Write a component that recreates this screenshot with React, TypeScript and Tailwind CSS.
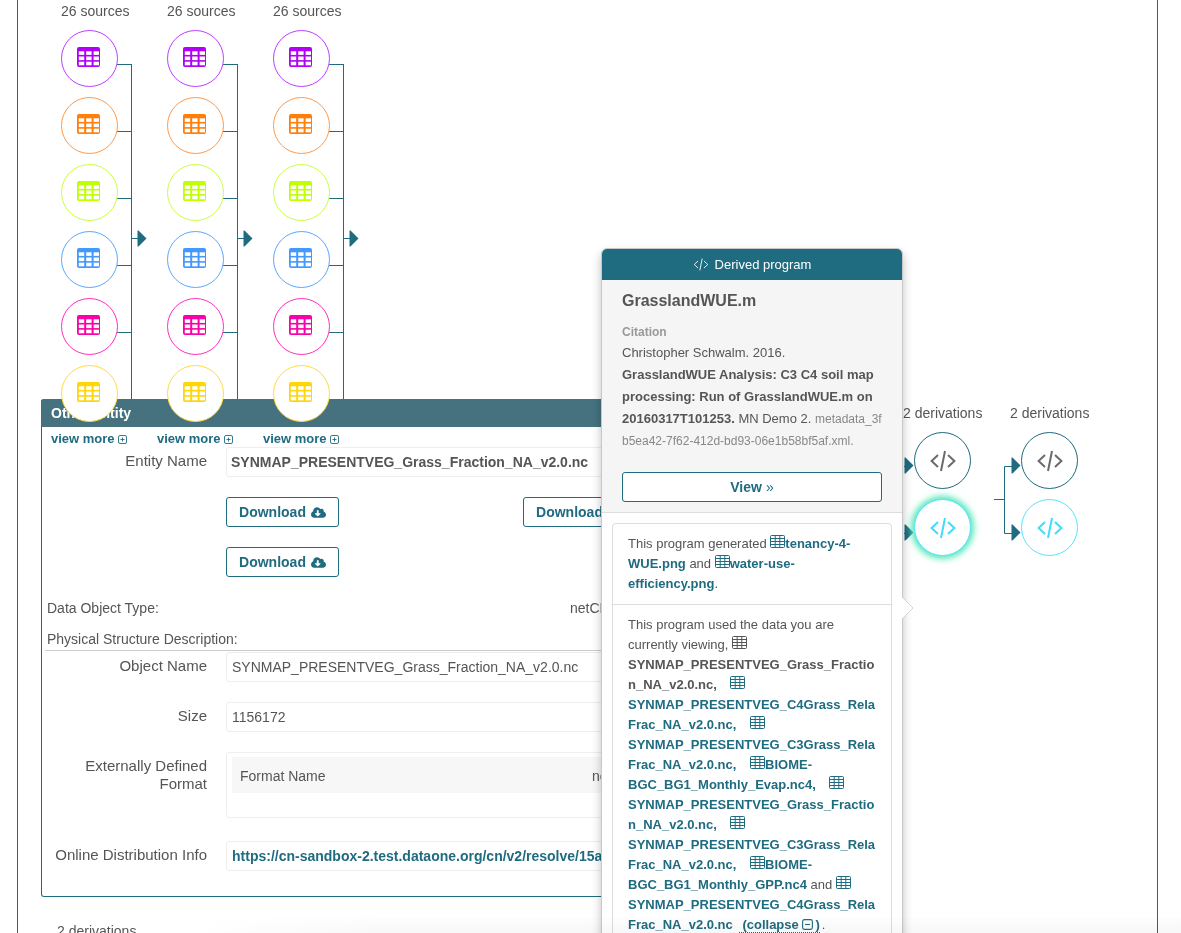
import React from "react";
import { FaCloudDownloadAlt } from "react-icons/fa";

const TEAL = "#1f6b80";

function SolidTable({ color }: { color: string }) {
  const xs = [1.8, 9.2, 16.6];
  const ys = [4.3, 9.5, 14.7];
  return (
    <svg width="23" height="20" viewBox="0 0 23 20" className="block">
      <rect x="0" y="0" width="23" height="20" rx="2" fill={color} />
      {ys.map((y) => xs.map((x) => <rect key={`${x}-${y}`} x={x} y={y} width="5.4" height="3.6" fill="#fff" />))}
    </svg>
  );
}

function OutlineTable({ color = TEAL }: { color?: string }) {
  return (
    <svg width="15" height="13" viewBox="0 0 15 13" className="inline-block align-[0px]">
      <rect x="0.5" y="0.5" width="14" height="12" rx="1" fill="none" stroke={color} />
      <path d="M0.5 3.5H14.5M0.5 6.5H14.5M0.5 9.5H14.5M5.2 0.5V12.5M9.8 0.5V12.5" stroke={color} fill="none" strokeWidth="1" />
    </svg>
  );
}

function CodeIcon({ color, w = 26, h = 22, sw = 2 }: { color: string; w?: number; h?: number; sw?: number }) {
  return (
    <svg width={w} height={h} viewBox="0 0 26 22" className="block" fill="none" stroke={color} strokeWidth={sw}>
      <path d="M8 5L1.6 11L8 17M18 5L24.4 11L18 17M15 1L11 21" />
    </svg>
  );
}

function BoxSign({ plus, size = 9 }: { plus: boolean; size?: number }) {
  return (
    <svg width={size} height={size} viewBox="0 0 9 9" className="inline-block align-[-0.5px]" fill="none" stroke={TEAL} strokeWidth={0.9}>
      <rect x="0.5" y="0.5" width="8" height="8" rx="1.5" />
      <path d={plus ? "M2.5 4.5H6.5M4.5 2.5V6.5" : "M2.5 4.5H6.5"} />
    </svg>
  );
}

const sources = [
  { c: "#b000f5", b: "#bb40ff" },
  { c: "#ff7f0a", b: "#ff9a4a" },
  { c: "#bfff00", b: "#c8ff40" },
  { c: "#4499ff", b: "#5aa8ff" },
  { c: "#fa00a8", b: "#ff30bc" },
  { c: "#ffd60a", b: "#ffdc40" },
];

function SourceColumn() {
  return (
    <div className="relative w-[106px] pt-[1px]">
      <svg width="106" height="422" className="absolute left-0 top-0" fill="none" stroke={TEAL}>
        {[64.5, 131.5, 198.5, 265.5, 332.5].map((y) => (
          <path key={y} d={`M56 ${y}H70.5`} />
        ))}
        <path d="M70.5 64V399M70.5 238.5H78" />
        <path d="M76.5 230.5H77.5L85.5 238.5L77.5 246.5H76.5Z" fill={TEAL} stroke="none" />
      </svg>
      <div className="mb-[9px] h-[20px] text-[14px] leading-[20px] text-[#555]">26 sources</div>
      <div className="flex flex-col gap-[10px]">
        {sources.map((s) => (
          <div
            key={s.c}
            className="relative z-10 flex h-[57px] w-[57px] items-center justify-center rounded-full border bg-white pb-[3px] pr-[2px]"
            style={{ borderColor: s.b }}
          >
            <SolidTable color={s.c} />
          </div>
        ))}
      </div>
    </div>
  );
}

function ViewMore() {
  return (
    <div className="w-[106px] text-[13px] font-bold leading-[16px] text-[#1f6b80]">
      view more <BoxSign plus />
    </div>
  );
}

function DownloadBtn() {
  return (
    <div className="mb-[20px] w-[297px]">
      <div className="flex h-[30px] w-[113px] items-center justify-center gap-[5px] rounded-[3px] border border-[#1f6b80] text-[14px] font-bold text-[#1f6b80]">
        Download <FaCloudDownloadAlt size={15} />
      </div>
    </div>
  );
}

function Row({ label, className, children }: { label: React.ReactNode; className?: string; children: React.ReactNode }) {
  return (
    <div className={`flex gap-[19px] ${className ?? ""}`}>
      <div className="w-[165px] shrink-0 pt-[5px] text-right text-[15px] leading-[18px] text-[#555]">{label}</div>
      <div className="flex-1 rounded-[3px] border border-[#eeeeee] text-[14px] leading-[20px] text-[#555]">{children}</div>
    </div>
  );
}

function Bold({ children }: { children: React.ReactNode }) {
  return <b className="font-bold text-[#1f6b80]">{children}</b>;
}

function GapA() {
  return <span className="inline-block w-[10px]" />;
}

function GapB() {
  return <span className="inline-block w-[9px]" />;
}

function Popover() {
  return (
    <div className="absolute left-[601px] top-[248px] z-20 w-[302px] rounded-[6px] border border-[#c8c8c8] bg-white pb-[40px] shadow-[0_5px_10px_rgba(0,0,0,0.25)]">
      <svg width="12" height="22" className="absolute left-[300px] top-[348px]">
        <path d="M0 0L11 11L0 22Z" fill="#fff" />
        <path d="M0 0L11 11L0 22" fill="none" stroke="#d4d4d4" />
      </svg>
      <div className="flex h-[31px] items-center justify-center gap-[6px] rounded-t-[5px] bg-[#1f6b80] text-[13px] text-white">
        <CodeIcon color="#fff" w={16} h={13} sw={1.5} />
        Derived program
      </div>
      <div className="h-[233px] border-b border-[#dddddd] bg-[#f5f5f5] px-[20px] text-[#555]">
        <div className="pt-[11px] text-[16px] font-bold leading-[20px]">GrasslandWUE.m</div>
        <div className="mt-[13px] text-[12px] font-bold leading-[16px] text-[#999]">Citation</div>
        <div className="mt-[2px] whitespace-nowrap text-[13px] leading-[22px]">
          Christopher Schwalm. 2016.
          <br />
          <b>GrasslandWUE Analysis: C3 C4 soil map</b>
          <br />
          <b>processing: Run of GrasslandWUE.m on</b>
          <br />
          <b>20160317T101253.</b> MN Demo 2. <span className="text-[12px] text-[#888]">metadata_3f</span>
          <br />
          <span className="text-[12px] text-[#888]">b5ea42-7f62-412d-bd93-06e1b58bf5af.xml.</span>
        </div>
        <div className="mt-[20px] flex h-[30px] items-center justify-center gap-[4px] rounded-[3px] border border-[#1f6b80] bg-white text-[14px] font-bold text-[#1f6b80]">
          View <span className="font-normal">»</span>
        </div>
      </div>
      <div className="px-[10px] pt-[10px]">
        <div className="w-[280px] rounded-t-[4px] border border-[#dddddd] text-[13px] leading-[20px] text-[#555]">
          <div className="border-b border-[#dddddd] px-[15px] pb-[10px] pt-[10px]">
            This program generated <OutlineTable />
            <Bold>tenancy-4-</Bold>
            <br />
            <Bold>WUE.png</Bold> and <OutlineTable />
            <Bold>water-use-</Bold>
            <br />
            <Bold>efficiency.png</Bold>.
          </div>
          <div className="whitespace-nowrap px-[15px] pb-[10px] pt-[10px]">
            This program used the data you are
            <br />
            currently viewing, <OutlineTable color="#555" />
            <br />
            <b>SYNMAP_PRESENTVEG_Grass_Fractio</b>
            <br />
            <b>n_NA_v2.0.nc,</b>
            <GapB /> <OutlineTable />
            <br />
            <Bold>SYNMAP_PRESENTVEG_C4Grass_Rela</Bold>
            <br />
            <Bold>Frac_NA_v2.0.nc,</Bold>
            <GapA /> <OutlineTable />
            <br />
            <Bold>SYNMAP_PRESENTVEG_C3Grass_Rela</Bold>
            <br />
            <Bold>Frac_NA_v2.0.nc,</Bold>
            <GapA /> <OutlineTable />
            <Bold>BIOME-</Bold>
            <br />
            <Bold>BGC_BG1_Monthly_Evap.nc4,</Bold>
            <GapA /> <OutlineTable />
            <br />
            <Bold>SYNMAP_PRESENTVEG_Grass_Fractio</Bold>
            <br />
            <Bold>n_NA_v2.0.nc,</Bold>
            <GapB /> <OutlineTable />
            <br />
            <Bold>SYNMAP_PRESENTVEG_C3Grass_Rela</Bold>
            <br />
            <Bold>Frac_NA_v2.0.nc,</Bold>
            <GapA /> <OutlineTable />
            <Bold>BIOME-</Bold>
            <br />
            <Bold>BGC_BG1_Monthly_GPP.nc4</Bold> and <OutlineTable />
            <br />
            <Bold>SYNMAP_PRESENTVEG_C4Grass_Rela</Bold>
            <br />
            <Bold>Frac_NA_v2.0.nc</Bold>
            <span className="inline-block w-[6px]" />
            <span className="border-b border-dotted border-[#555] font-bold text-[#1f6b80]">
              {" "}
              (collapse <BoxSign plus={false} size={11} />
              <span className="ml-[2px]">)</span>
            </span>
            <span className="ml-[2px]">.</span>
          </div>
        </div>
      </div>
    </div>
  );
}

function DerivNode({ cls, color, border, extra }: { cls: string; color: string; border: string; extra?: string }) {
  return (
    <div
      className={`absolute flex h-[57px] w-[57px] items-center justify-center rounded-full border bg-white ${cls} ${extra ?? ""}`}
      style={{ borderColor: border }}
    >
      <CodeIcon color={color} />
    </div>
  );
}

export default function App() {
  return (
    <div className="relative h-[933px] w-[1181px] overflow-hidden bg-white font-['Liberation_Sans',Arial,sans-serif]">
      <div className="relative ml-[17px] h-[933px] w-[1141px] border-x border-[#1f6b80]">
        <div className="flex pl-[43px]">
          <SourceColumn />
          <SourceColumn />
          <SourceColumn />
        </div>

        <div className="relative ml-[23px] mt-[-23px] w-[700px] rounded-[3px] border border-t-0 border-[#1f6b80] pb-[25px]">
          <div className="-mx-px flex h-[28px] items-center rounded-t-[3px] bg-[#46727f] pl-[10px] text-[14px] font-bold text-white">
            Other Entity
          </div>
          <div className="flex h-[20px] items-start pl-[9px] pt-[4px]">
            <ViewMore />
            <ViewMore />
            <ViewMore />
          </div>
          <Row label="Entity Name">
            <div className="h-[28px] pl-[4px] pt-[4px] font-bold">SYNMAP_PRESENTVEG_Grass_Fraction_NA_v2.0.nc</div>
          </Row>
          <div className="ml-[184px] mt-[20px] flex w-[594px] flex-wrap">
            <DownloadBtn />
            <DownloadBtn />
            <DownloadBtn />
          </div>
          <div className="ml-[5px] mt-[1px] flex h-[20px] text-[14px] leading-[20px] text-[#555]">
            <div className="w-[523px]">Data Object Type:</div>
            <div>netCDF-3</div>
          </div>
          <div className="ml-[3px] mt-[11px] h-[22px] border-b border-[#cccccc] pl-[2px] text-[14px] leading-[20px] text-[#555]">
            Physical Structure Description:
          </div>
          <Row label="Object Name" className="mt-[1px]">
            <div className="h-[28px] pl-[5px] pt-[4px]">SYNMAP_PRESENTVEG_Grass_Fraction_NA_v2.0.nc</div>
          </Row>
          <Row label="Size" className="mt-[20px]">
            <div className="h-[28px] pl-[5px] pt-[4px]">1156172</div>
          </Row>
          <Row
            label={
              <>
                Externally Defined
                <br />
                Format
              </>
            }
            className="mt-[20px]"
          >
            <div className="h-[64px] px-[5px] pt-[4px]">
              <div className="flex h-[36px] items-center bg-[#f7f7f7] pl-[8px] pt-[1px]">
                <div className="w-[352px]">Format Name</div>
                <div>netCDF-3</div>
              </div>
            </div>
          </Row>
          <Row label="Online Distribution Info" className="mt-[23px]">
            <div className="h-[28px] overflow-hidden whitespace-nowrap pl-[5px] pt-[4px] font-bold text-[#1f6b80]">
              https://cn-sandbox-2.test.dataone.org/cn/v2/resolve/15a0c1b8-53d2-4c3e-9f2e-7d1e6a2b0c44
            </div>
          </Row>
        </div>

        <div className="ml-[39px] mt-[24px] text-[14px] leading-[20px] text-[#555]">2 derivations</div>

        <div className="absolute left-[885px] top-[403px] text-[14px] leading-[20px] text-[#555]">2 derivations</div>
        <div className="absolute left-[992px] top-[403px] text-[14px] leading-[20px] text-[#555]">2 derivations</div>

        <svg width="130" height="90" className="absolute left-[886px] top-[455px]" fill="none" stroke={TEAL}>
          <path d="M0 11.5H2M0 78.5H2" />
          <path d="M0.5 2.5H1.5L9.5 10.5L1.5 18.5H0.5Z" fill={TEAL} stroke="none" />
          <path d="M0.5 69.5H1.5L9.5 77.5L1.5 85.5H0.5Z" fill={TEAL} stroke="none" />
          <path d="M90 44.5H100.5M100.5 11.5V78.5M100.5 11.5H109M100.5 78.5H109" />
          <path d="M107.5 2.5H108.5L116.5 10.5L108.5 18.5H107.5Z" fill={TEAL} stroke="none" />
          <path d="M107.5 69.5H108.5L116.5 77.5L108.5 85.5H107.5Z" fill={TEAL} stroke="none" />
        </svg>

        <DerivNode cls="left-[896px] top-[432px]" color="#6b6b6b" border={TEAL} />
        <DerivNode cls="left-[896px] top-[499px]" color="#3fdcff" border="#55e5ff" extra="shadow-[0_0_6px_3px_#55e6b8]" />
        <DerivNode cls="left-[1003px] top-[432px]" color="#6b6b6b" border={TEAL} />
        <DerivNode cls="left-[1003px] top-[499px]" color="#3fdcff" border="#55e5ff" />
      </div>

      <Popover />

      <div className="pointer-events-none absolute bottom-0 left-[190px] right-0 z-30 h-[18px] bg-gradient-to-t from-[#f7f7f7] to-transparent mix-blend-multiply [mask-image:linear-gradient(to_right,transparent,black_200px)]" />
    </div>
  );
}
